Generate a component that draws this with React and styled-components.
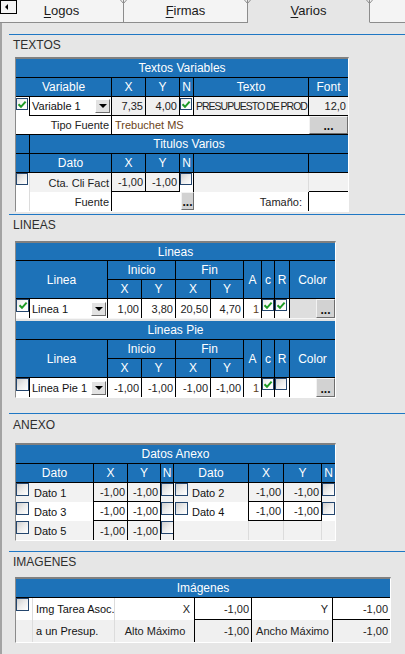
import React from 'react';
import styled, { createGlobalStyle } from 'styled-components';

const BLUE = '#1d72b8';
const LIGHT = '#dcdcdc';

const GlobalStyle = createGlobalStyle`
  html, body { margin: 0; padding: 0; background: #e6e6e6; }
  body { font-family: "Liberation Sans", Arial, sans-serif; }
  *, *::before, *::after { box-sizing: border-box; }
`;

const Screen = styled.div`
  position: relative;
  width: 405px;
  height: 654px;
  overflow: hidden;
  background: #e6e6e6;
  display: flex;
  flex-direction: column;
`;

/* ---------- tabs ---------- */
const TabStrip = styled.div`
  position: relative;
  display: flex;
  height: 23px;
  flex: none;
`;

const Tab = styled.div`
  position: relative;
  flex: ${p => (p.$w ? `0 0 ${p.$w}px` : '1 1 auto')};
  display: flex;
  align-items: center;
  justify-content: center;
  font-size: 13px;
  color: #1a1a1a;
  background: ${p => (p.$active ? '#e6e6e6' : '#f4f4f4')};
  border-bottom: 1px solid ${p => (p.$active ? 'transparent' : '#8c8c8c')};
  border-right: ${p => (p.$last ? 'none' : '1px solid #8c8c8c')};
  padding-bottom: 1px;
  u { text-decoration: underline; text-underline-offset: 2px; }
`;

const Notch = styled.svg`
  position: absolute;
  top: 0;
  right: -4px;
  z-index: 1;
`;

const ArrowBtn = styled.div`
  position: absolute;
  left: 0;
  top: 0;
  width: 17px;
  height: 14px;
  border: 1px solid #000;
  background: #f4f4f4;
  z-index: 2;
  display: flex;
  align-items: center;
  justify-content: center;
  &::after {
    content: '';
    border-top: 3px solid transparent;
    border-bottom: 3px solid transparent;
    border-right: 3px solid #000;
    margin-right: 4px;
  }
`;

/* ---------- panel / sections ---------- */
const Panel = styled.div`
  flex: 1;
  border-left: 2px solid #a3a3a3;
  padding-left: 7px;
  display: flex;
  flex-direction: column;
`;

const Section = styled.section`
  display: flex;
  flex-direction: column;
  margin-top: ${p => p.$mt}px;
`;

const Rule = styled.div`
  height: 1px;
  background: #1f77c4;
`;

const Heading = styled.div`
  margin: ${p => p.$mt}px 0 0 4px;
  font-size: 12px;
  line-height: 14px;
  height: 14px;
  color: #2e2e2e;
`;

const Frame = styled.div`
  margin: ${p => p.$mt}px 0 0 6px;
  width: ${p => p.$w}px;
  border-top: 2px solid #808080;
  border-left: 1px solid #8a8a8a;
  border-right: 1px solid #fff;
  border-bottom: 1px solid #fff;
  background: #fff;
`;

const Grid = styled.div`
  display: grid;
  grid-template-columns: ${p => p.$cols};
  grid-template-rows: ${p => p.$rows};
`;

const Gap = styled.div`
  height: 3px;
  background: #e3e3e3;
  border-top: 1px solid #f6f6f6;
`;

const edge = c => (c ? `1px solid ${c}` : 'none');

const Head = styled.div`
  grid-column: span ${p => p.$c || 1};
  grid-row: span ${p => p.$rs || 1};
  background: ${BLUE};
  color: #fff;
  font-size: 12px;
  display: flex;
  align-items: center;
  justify-content: center;
  white-space: nowrap;
  overflow: hidden;
  border-right: ${p => (p.$nr ? 'none' : '1px solid #000')};
  border-bottom: 1px solid #000;
`;

const Cell = styled.div`
  grid-column: span ${p => p.$c || 1};
  background: ${p => p.$bg || '#fff'};
  color: ${p => p.$color || '#222'};
  font-size: 11px;
  display: flex;
  align-items: ${p => (p.$top ? 'flex-start' : 'center')};
  justify-content: ${p =>
    p.$align === 'right' ? 'flex-end' : p.$align === 'center' ? 'center' : 'flex-start'};
  padding: 0 ${p => p.$pr ?? 2}px 0 ${p => p.$pl ?? 3}px;
  white-space: nowrap;
  overflow: hidden;
  border-right: ${p => edge(p.$br)};
  border-bottom: ${p => edge(p.$bb)};
`;

const Squeeze = styled.span`
  font-size: 10.5px;
  letter-spacing: -1px;
`;

const Combo = styled.div`
  background: #fff;
  color: #111;
  font-size: 11px;
  display: flex;
  align-items: center;
  justify-content: space-between;
  padding: 0 1px 0 2px;
  white-space: nowrap;
  border-right: 1px solid #000;
  border-bottom: ${p => (p.$bb ? '1px solid #000' : 'none')};
`;

const DropBtn = styled.span`
  flex: none;
  width: 15px;
  height: 14px;
  background: #e2e2e2;
  border-top: 1px solid #fff;
  border-left: 1px solid #fff;
  border-right: 1px solid #6e6e6e;
  border-bottom: 1px solid #6e6e6e;
  display: flex;
  align-items: center;
  justify-content: center;
  &::after {
    content: '';
    border-left: 4px solid transparent;
    border-right: 4px solid transparent;
    border-top: 4px solid #000;
  }
`;

const DotsBtn = styled.div`
  flex: ${p => (p.$grow ? '1 1 auto' : 'none')};
  width: ${p => (p.$w ? `${p.$w}px` : 'auto')};
  height: ${p => p.$h}px;
  background: #d2d2d2;
  border-top: 1px solid #f2f2f2;
  border-left: 1px solid #f2f2f2;
  border-right: 1px solid #6e6e6e;
  border-bottom: 1px solid #6e6e6e;
  display: flex;
  align-items: flex-end;
  justify-content: center;
  font-size: 12px;
  font-weight: bold;
  line-height: 9px;
  padding-bottom: 2px;
  color: #111;
`;

const ColorCell = styled.div`
  display: flex;
  align-items: stretch;
  background: #fff;
`;

const Swatch = styled.div`
  flex: 1;
  background: ${p => p.$c};
`;

const Box = styled.span`
  flex: none;
  display: inline-flex;
  align-items: center;
  justify-content: center;
  width: ${p => p.$s}px;
  height: ${p => p.$s}px;
  margin-top: ${p => p.$mt || 0}px;
  margin-left: ${p => p.$ml || 0}px;
  border: 1px solid #24466e;
  background: ${p =>
    p.$on
      ? 'linear-gradient(135deg, #e6e6e6 0%, #fafafa 50%, #fff 100%)'
      : 'linear-gradient(135deg, #cfcfcf 0%, #ececec 50%, #fff 100%)'};
`;

function Check({ on, s = 12, mt = 0, ml = 0 }) {
  return (
    <Box $s={s} $on={on} $mt={mt} $ml={ml}>
      {on && (
        <svg width="10" height="9" viewBox="0 0 10 9">
          <path d="M1.5 4.2 L4 6.8 L8.6 1.6" stroke="#1e9a26" strokeWidth="2" fill="none" />
        </svg>
      )}
    </Box>
  );
}

/* ---------- sections ---------- */
function Textos() {
  return (
    <Section $mt={11}>
      <Rule />
      <Heading $mt={3}>TEXTOS</Heading>
      <Frame $mt={5} $w={334}>
        <Grid $cols="14px 82px 34px 34px 14px 115px 39px" $rows="repeat(8, 19px)">
          <Head $c={7} $nr>Textos Variables</Head>

          <Head $c={2}>Variable</Head>
          <Head>X</Head>
          <Head>Y</Head>
          <Head>N</Head>
          <Head>Texto</Head>
          <Head $nr>Font</Head>

          <Cell $pl={0} $pr={0} $top $br="#000"><Check on mt={1} /></Cell>
          <Combo $bb>Variable 1<DropBtn /></Combo>
          <Cell $bg="#f0f0f0" $align="right" $br="#000" $bb="#000">7,35</Cell>
          <Cell $bg="#f0f0f0" $align="right" $br="#000" $bb="#000">4,00</Cell>
          <Cell $pl={0} $pr={0} $top $br="#000" $bb="#000"><Check on mt={1} /></Cell>
          <Cell $bg="#f0f0f0" $pl={2} $pr={0} $br="#000" $bb="#000"><Squeeze>PRESUPUESTO DE PROD</Squeeze></Cell>
          <Cell $bg="#f0f0f0" $align="right" $bb="#000">12,0</Cell>

          <Cell $c={2} $align="right" $br="#000" $bb="#000">Tipo Fuente</Cell>
          <Cell $c={4} $color="#6b4420" $bb="#000">Trebuchet MS</Cell>
          <Cell $pl={0} $pr={0} $top $bb="#000"><DotsBtn $grow $h={18}>...</DotsBtn></Cell>

          <Head />
          <Head $c={6} $nr>Titulos Varios</Head>

          <Head />
          <Head>Dato</Head>
          <Head>X</Head>
          <Head>Y</Head>
          <Head>N</Head>
          <Head />
          <Head $nr />

          <Cell $pl={0} $pr={0} $top $br={LIGHT}><Check /></Cell>
          <Cell $bg="#f2f2f2" $align="right" $br="#000">Cta. Cli Fact</Cell>
          <Cell $bg="#f2f2f2" $align="right" $br="#000" $bb="#000">-1,00</Cell>
          <Cell $bg="#f2f2f2" $align="right" $br="#000" $bb="#000">-1,00</Cell>
          <Cell $pl={0} $pr={0} $top $br="#000"><Check /></Cell>
          <Cell $bg="#f2f2f2" $br={LIGHT} />
          <Cell $bg="#f2f2f2" $bb="#000" />

          <Cell $br={LIGHT} />
          <Cell $align="right" $br="#000">Fuente</Cell>
          <Cell $c={2} />
          <Cell $pl={1} $pr={0} $top><DotsBtn $grow $h={18}>...</DotsBtn></Cell>
          <Cell $align="right" $pr={6} $br="#000">Tamaño:</Cell>
          <Cell />
        </Grid>
      </Frame>
    </Section>
  );
}

const LINE_COLS = '14px 78px 34px 34px 35px 33px 18px 13px 15px 45px';

function LineTable({ title, name, values, c, r, swatch, titleRow }) {
  return (
    <Grid $cols={LINE_COLS} $rows={`${titleRow}px 19px 19px 19px`}>
      <Head $c={10} $nr>{title}</Head>
      <Head $c={2} $rs={2}>Linea</Head>
      <Head $c={2}>Inicio</Head>
      <Head $c={2}>Fin</Head>
      <Head $rs={2}>A</Head>
      <Head $rs={2}>c</Head>
      <Head $rs={2}>R</Head>
      <Head $rs={2} $nr>Color</Head>
      <Head>X</Head>
      <Head>Y</Head>
      <Head>X</Head>
      <Head>Y</Head>

      <Cell $pl={0} $pr={0} $top $br="#000"><Check on={name === 'Linea 1'} s={13} /></Cell>
      <Combo>{name}<DropBtn /></Combo>
      {values.map((v, i) => (
        <Cell key={i} $align="right" $br="#000">{v}</Cell>
      ))}
      <Cell $align="right" $br="#000" $color="#5a3a1a">1</Cell>
      <Cell $pl={0} $pr={0} $top $br="#000"><Check on={c} /></Cell>
      <Cell $pl={0} $pr={0} $top $br="#000"><Check on={r} /></Cell>
      <ColorCell>
        <Swatch $c={swatch} />
        <DotsBtn $w={19} $h={19}>...</DotsBtn>
      </ColorCell>
    </Grid>
  );
}

function Lineas() {
  return (
    <Section $mt={2}>
      <Rule />
      <Heading $mt={3}>LINEAS</Heading>
      <Frame $mt={9} $w={321}>
        <LineTable
          title="Lineas"
          name="Linea 1"
          values={['1,00', '3,80', '20,50', '4,70']}
          c
          r
          swatch="#dedede"
          titleRow={18}
        />
        <Gap />
        <LineTable
          title="Lineas Pie"
          name="Linea Pie 1"
          values={['-1,00', '-1,00', '-1,00', '-1,00']}
          c
          r={false}
          swatch="#fff"
          titleRow={19}
        />
      </Frame>
    </Section>
  );
}

const ANEXO_ROWS = [
  { l: 'Dato 1', r: 'Dato 2' },
  { l: 'Dato 3', r: 'Dato 4' },
  { l: 'Dato 5', r: null },
];

function Anexo() {
  return (
    <Section $mt={15}>
      <Rule />
      <Heading $mt={4}>ANEXO</Heading>
      <Frame $mt={11} $w={321}>
        <Grid $cols="15px 63px 34px 33px 13px 17px 58px 35px 38px 13px" $rows="repeat(5, 19px)">
          <Head $c={10} $nr>Datos Anexo</Head>
          <Head $c={2}>Dato</Head>
          <Head>X</Head>
          <Head>Y</Head>
          <Head>N</Head>
          <Head $c={2}>Dato</Head>
          <Head>X</Head>
          <Head>Y</Head>
          <Head $nr>N</Head>

          {ANEXO_ROWS.map((row, i) => {
            const bg = i % 2 === 0 ? '#f2f2f2' : '#fff';
            const last = i === ANEXO_ROWS.length - 1;
            const bb = last ? undefined : '#000';
            return (
              <React.Fragment key={row.l}>
                <Cell $bg={bg} $pl={0} $pr={0} $top><Check s={13} /></Cell>
                <Cell $bg={bg} $pl={3} $br="#000" $color="#111">{row.l}</Cell>
                <Cell $bg={bg} $align="right" $br="#000" $bb={bb}>-1,00</Cell>
                <Cell $bg={bg} $align="right" $br="#000" $bb={bb}>-1,00</Cell>
                <Cell $bg={bg} $pl={0} $pr={0} $top $br="#000"><Check s={13} /></Cell>
                {row.r ? (
                  <>
                    <Cell $bg={bg} $pl={0} $pr={0} $top><Check s={13} ml={1} /></Cell>
                    <Cell $bg={bg} $pl={1} $br="#000" $color="#111">{row.r}</Cell>
                    <Cell $bg={bg} $align="right" $br="#000" $bb="#000">-1,00</Cell>
                    <Cell $bg={bg} $align="right" $br="#000" $bb="#000">-1,00</Cell>
                    <Cell $bg={bg} $pl={0} $pr={0} $top><Check s={13} /></Cell>
                  </>
                ) : (
                  <>
                    <Cell $bg={bg} />
                    <Cell $bg={bg} $br={LIGHT} />
                    <Cell $bg={bg} $br={LIGHT} />
                    <Cell $bg={bg} $br={LIGHT} />
                    <Cell $bg={bg} />
                  </>
                )}
              </React.Fragment>
            );
          })}
        </Grid>
      </Frame>
    </Section>
  );
}

function Imagenes() {
  return (
    <Section $mt={10}>
      <Rule />
      <Heading $mt={3}>IMAGENES</Heading>
      <Frame $mt={8} $w={376}>
        <Grid $cols="17px 82px 80px 57px 81px 57px" $rows="19px 22px 22px">
          <Head $c={6} $nr>Imágenes</Head>

          <Cell $pl={0} $pr={0} $top $br={LIGHT}><Check s={13} /></Cell>
          <Cell $pl={3} $br={LIGHT} $color="#111">Img Tarea Asoc.</Cell>
          <Cell $align="right" $pr={4} $br="#000">X</Cell>
          <Cell $align="right" $br="#000" $bb="#000">-1,00</Cell>
          <Cell $align="right" $pr={4} $br="#000">Y</Cell>
          <Cell $align="right" $bb="#000">-1,00</Cell>

          <Cell $bg="#f0f0f0" $br={LIGHT} />
          <Cell $bg="#f0f0f0" $pl={3} $br={LIGHT} $color="#111">a un Presup.</Cell>
          <Cell $bg="#f0f0f0" $align="center" $br="#000">Alto Máximo</Cell>
          <Cell $bg="#f0f0f0" $align="right" $br="#000">-1,00</Cell>
          <Cell $bg="#f0f0f0" $align="center" $br="#000">Ancho Máximo</Cell>
          <Cell $bg="#f0f0f0" $align="right">-1,00</Cell>
        </Grid>
      </Frame>
    </Section>
  );
}

function TabNotch() {
  return (
    <Notch width="7" height="4" viewBox="0 0 7 4">
      <path d="M0.5 0 L3.5 3.5 L6.5 0" stroke="#8c8c8c" strokeWidth="1" fill="none" />
    </Notch>
  );
}

export default function App() {
  return (
    <>
      <GlobalStyle />
      <Screen>
        <TabStrip>
          <ArrowBtn />
          <Tab $w={124}><span><u>L</u>ogos</span><TabNotch /></Tab>
          <Tab $w={124}><span><u>F</u>irmas</span><TabNotch /></Tab>
          <Tab $w={122} $active><span><u>V</u>arios</span><TabNotch /></Tab>
          <Tab $last />
        </TabStrip>
        <Panel>
          <Textos />
          <Lineas />
          <Anexo />
          <Imagenes />
        </Panel>
      </Screen>
    </>
  );
}
